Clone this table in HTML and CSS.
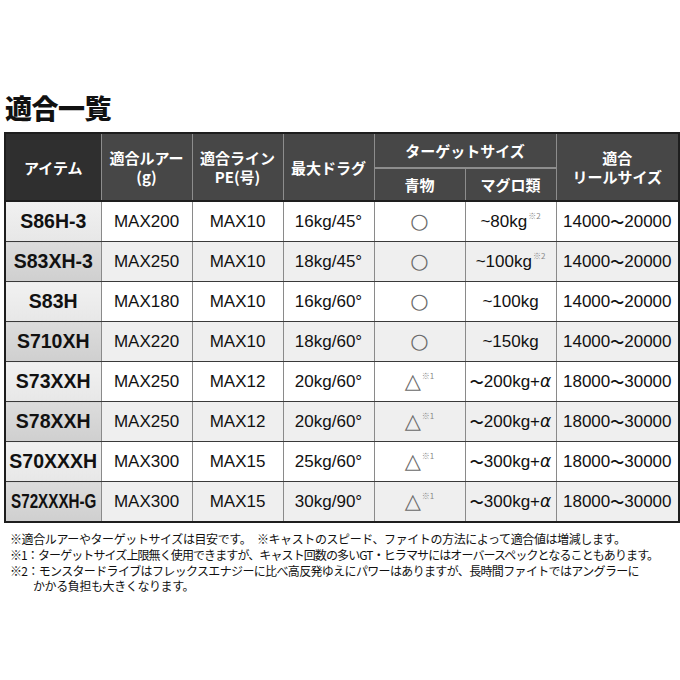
FILE: index.html
```html
<!DOCTYPE html>
<html lang="ja">
<head>
<meta charset="utf-8">
<link rel="stylesheet" href="styles.css">
</head>
<body>
<div class="page">
  <h1 class="title">適合一覧</h1>
  <table class="spec">
    <colgroup>
      <col class="c1"><col class="c2"><col class="c3"><col class="c4"><col class="c5"><col class="c6"><col class="c7">
    </colgroup>
    <thead>
      <tr class="h1">
        <th rowspan="2" class="first">アイテム</th>
        <th rowspan="2">適合ルアー<br>(g)</th>
        <th rowspan="2">適合ライン<br>PE(号)</th>
        <th rowspan="2">最大ドラグ</th>
        <th colspan="2">ターゲットサイズ</th>
        <th rowspan="2">適合<br>リールサイズ</th>
      </tr>
      <tr class="h2">
        <th>青物</th>
        <th>マグロ類</th>
      </tr>
    </thead>
    <tbody>
      <tr>
        <td class="name">S86H-3</td><td>MAX200</td><td>MAX10</td><td>16kg/45°</td>
        <td><span class="mark">○</span></td>
        <td>~80kg<sup>※2</sup></td><td>14000<span class="w">〜</span>20000</td>
      </tr>
      <tr class="alt">
        <td class="name">S83XH-3</td><td>MAX250</td><td>MAX10</td><td>18kg/45°</td>
        <td><span class="mark">○</span></td>
        <td>~100kg<sup>※2</sup></td><td>14000<span class="w">〜</span>20000</td>
      </tr>
      <tr>
        <td class="name">S83H</td><td>MAX180</td><td>MAX10</td><td>16kg/60°</td>
        <td><span class="mark">○</span></td>
        <td>~100kg</td><td>14000<span class="w">〜</span>20000</td>
      </tr>
      <tr class="alt">
        <td class="name">S710XH</td><td>MAX220</td><td>MAX10</td><td>18kg/60°</td>
        <td><span class="mark">○</span></td>
        <td>~150kg</td><td>14000<span class="w">〜</span>20000</td>
      </tr>
      <tr>
        <td class="name">S73XXH</td><td>MAX250</td><td>MAX12</td><td>20kg/60°</td>
        <td><span class="mark">△</span><sup>※1</sup></td>
        <td><span class="w">〜</span>200kg+<i class="a">α</i></td><td>18000<span class="w">〜</span>30000</td>
      </tr>
      <tr class="alt">
        <td class="name">S78XXH</td><td>MAX250</td><td>MAX12</td><td>20kg/60°</td>
        <td><span class="mark">△</span><sup>※1</sup></td>
        <td><span class="w">〜</span>200kg+<i class="a">α</i></td><td>18000<span class="w">〜</span>30000</td>
      </tr>
      <tr>
        <td class="name">S70XXXH</td><td>MAX300</td><td>MAX15</td><td>25kg/60°</td>
        <td><span class="mark">△</span><sup>※1</sup></td>
        <td><span class="w">〜</span>300kg+<i class="a">α</i></td><td>18000<span class="w">〜</span>30000</td>
      </tr>
      <tr class="alt">
        <td class="name"><span class="squeeze">S72XXXH-G</span></td><td>MAX300</td><td>MAX15</td><td>30kg/90°</td>
        <td><span class="mark">△</span><sup>※1</sup></td>
        <td><span class="w">〜</span>300kg+<i class="a">α</i></td><td>18000<span class="w">〜</span>30000</td>
      </tr>
    </tbody>
  </table>
  <div class="notes">
    <p>※適合ルアーやターゲットサイズは目安です。　※キャストのスピード、ファイトの方法によって適合値は増減します。</p>
    <p class="l2">※1：ターゲットサイズ上限無く使用できますが、キャスト回数の多いGT・ヒラマサにはオーバースペックとなることもあります。</p>
    <p class="l3">※2：モンスタードライブはフレックスエナジーに比べ高反発ゆえにパワーはありますが、長時間ファイトではアングラーに</p>
    <p class="indent">かかる負担も大きくなります。</p>
  </div>
</div>
</body>
</html>
```

FILE: styles.css
```css
html, body {
  margin: 0;
  padding: 0;
  background: #ffffff;
}

.page {
  padding: 93px 2px 0 4px;
  font-family: "Liberation Sans", "Noto Sans CJK JP", sans-serif;
  color: #111;
}

.title {
  margin: 0 0 9px 1px;
  font-family: "Noto Sans CJK JP", sans-serif;
  font-weight: 900;
  font-size: 27px;
  line-height: 30px;
  color: #111;
  letter-spacing: -0.5px;
}

.spec {
  width: 674px;
  table-layout: fixed;
  border-collapse: collapse;
  border: 2px solid #1e1e1e;
}

.c1 { width: 96px; }
.c2, .c3, .c4, .c5, .c6 { width: 91px; }
.c7 { width: 123px; }

.spec th {
  background: #474747;
  color: #fff;
  font-family: "Noto Sans CJK JP", sans-serif;
  font-weight: 700;
  font-size: 15px;
  line-height: 19px;
  padding: 0;
  border: 1px solid #8d8d8d;
  border-bottom: 2px solid #1e1e1e;
  text-align: center;
  vertical-align: middle;
}

.spec th.first {
  background: #2f2f2f;
}

.spec thead .h1 th[colspan] {
  border-bottom: 2px solid #8d8d8d;
}

.spec tr.h1 { height: 35px; }
.spec tr.h2 { height: 33px; }

.spec tr.h1 th {
  border-top: 2px solid #1e1e1e;
}

.spec td {
  height: 39px;
  padding: 0;
  text-align: center;
  vertical-align: middle;
  font-size: 17px;
  border-left: 1px solid #8a8a8a;
  border-right: 1px solid #8a8a8a;
  border-bottom: 1px solid #3a3a3a;
  white-space: nowrap;
  background: #fff;
}

.spec tr.alt td {
  background: #efefef;
}

.spec td.name {
  font-weight: 700;
  font-size: 19.5px;
  background: linear-gradient(#f1f1f1, #e7e7e7);
}

.spec tr.alt td.name {
  background: linear-gradient(#dcdcdc, #cfcfcf);
}

.squeeze {
  display: inline-block;
  transform: scaleX(0.78);
  margin: 0 -13px;
}

.w {
  font-family: "Noto Sans CJK JP", sans-serif;
  font-size: 14px;
  font-weight: 700;
}

.mark {
  font-family: "DejaVu Sans", sans-serif;
  font-size: 21px;
  line-height: 20px;
  color: #6a6a6a;
  vertical-align: -1px;
}

sup {
  font-family: "Noto Sans CJK JP", sans-serif;
  font-size: 8px;
  color: #888;
  vertical-align: 8px;
  line-height: 0;
  margin-left: 1px;
}

.a {
  font-family: "DejaVu Sans", sans-serif;
  font-style: italic;
  font-size: 17px;
}

.notes {
  padding: 8px 0 0 6px;
  font-family: "Noto Sans CJK JP", sans-serif;
  font-size: 12px;
  line-height: 15.8px;
  color: #111;
  letter-spacing: -0.4px;
}

.notes p {
  margin: 0;
  white-space: nowrap;
}

.notes .l2 {
  letter-spacing: -0.9px;
}

.notes .l3 {
  letter-spacing: -0.65px;
}

.notes .indent {
  padding-left: 23px;
}
```
